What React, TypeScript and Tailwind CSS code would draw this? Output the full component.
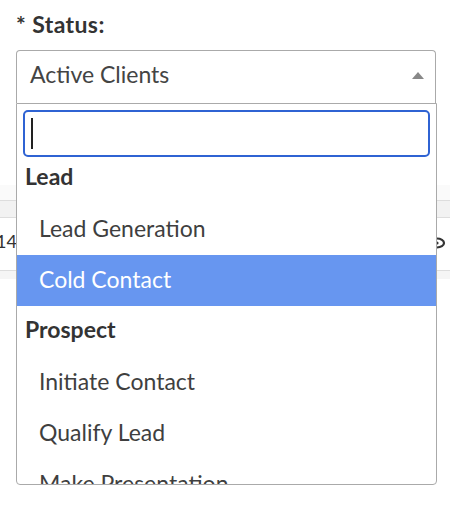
import React from "react";

type Item = { label: string; group?: boolean; active?: boolean };

const items: Item[] = [
  { label: "Lead", group: true },
  { label: "Lead Generation" },
  { label: "Cold Contact", active: true },
  { label: "Prospect", group: true },
  { label: "Initiate Contact" },
  { label: "Qualify Lead" },
  { label: "Make Presentation" },
];

function Row({ item }: { item: Item }) {
  if (item.group) {
    const first = item.label === "Lead";
    return (
      <div
        className={
          first
            ? "h-[43px] pt-[1px] pl-[8px] text-[23px] leading-[28px] font-bold text-[#333]"
            : "h-[51px] pt-[9px] pl-[8px] text-[23px] leading-[28px] font-bold text-[#333]"
        }
      >
        {item.label}
      </div>
    );
  }
  return (
    <div
      className={
        item.active
          ? "h-[51px] pt-[10px] pl-[22px] text-[23px] leading-[28px] bg-[#6796f0] text-white"
          : "h-[51px] pt-[10px] pl-[22px] text-[23px] leading-[28px] text-[#3f3f3f]"
      }
    >
      {item.label}
    </div>
  );
}

export default function App() {
  return (
    <div className="w-[450px] h-[508px] bg-white overflow-hidden font-['Lato',sans-serif]">
      <div className="px-[16px] pt-[10px]">
        <div className="text-[23px] leading-[28px] font-bold text-[#333] tracking-[0.4px]">
          * Status:
        </div>
        <div className="relative z-10 mt-[12px] w-[420px]">
          <div className="h-[53px] border-x border-t border-[#aaa] rounded-t-[4px] flex items-start justify-between pl-[13px] pr-[11px] pt-[9px] bg-white">
            <span className="text-[23px] leading-[28px] text-[#444]">Active Clients</span>
            <svg width="12" height="7" viewBox="0 0 12 7" className="mt-[12px]">
              <path d="M0 7 L6 0 L12 7 Z" fill="#888" />
            </svg>
          </div>
          <div className="absolute left-0 top-full w-[421px] h-[382px] border border-[#aaa] rounded-b-[4px] bg-white overflow-hidden">
            <div className="px-[6px] pt-[6px] pb-[4px]">
              <div className="h-[47px] border-2 border-[#2f63d3] rounded-[5px] flex items-center pl-[6px]">
                <div className="w-[2px] h-[31px] bg-[#222]" />
              </div>
            </div>
            {items.map((it) => (
              <Row key={it.label} item={it} />
            ))}
          </div>
        </div>
      </div>

      <div className="mt-[82px]">
        <div className="h-[15px] bg-[#fafafa]" />
        <div className="h-[1px] bg-[#dddddd]" />
        <div className="h-[16px] bg-[#f2f2f2]" />
        <div className="h-[1px] bg-[#dddddd]" />
        <div className="h-[52px] bg-white flex items-start justify-between">
          <span className="ml-[-4px] pt-[12px] text-[18px] leading-[22px] text-[#333]">14</span>
          <svg width="18" height="12" viewBox="0 0 18 12" className="mt-[19px] mr-[4px]">
            <ellipse cx="9" cy="6" rx="7" ry="4.5" fill="none" stroke="#333" strokeWidth="2.2" />
            <circle cx="9" cy="6" r="1.6" fill="#333" />
          </svg>
        </div>
        <div className="h-[1px] bg-[#dddddd]" />
        <div className="h-[8px] bg-[#f5f5f5]" />
      </div>
    </div>
  );
}
